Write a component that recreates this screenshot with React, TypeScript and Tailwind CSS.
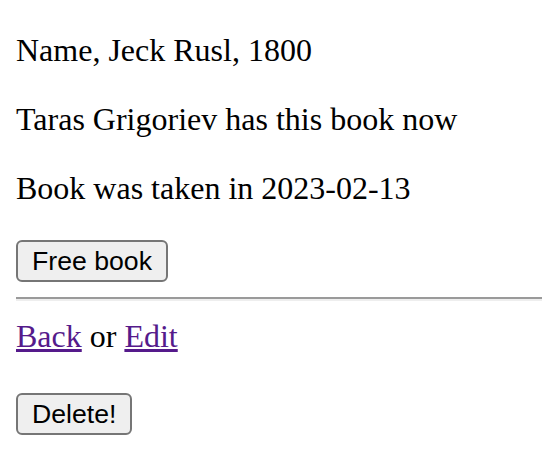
export default function App() {
  const btn =
    "inline-block bg-[#efefef] border-2 border-[#767676] rounded-[6px] px-[14px] h-[42px] font-['Liberation_Sans',Arial,sans-serif] text-[26.67px] leading-[normal] text-black";
  return (
    <div className="bg-white min-h-[468px] pl-[16px] pt-[32px] font-['Liberation_Serif','Times_New_Roman',serif] text-[32px] leading-[normal] text-black">
      <p className="mb-[32px]">Name, Jeck Rusl, 1800</p>
      <p className="mb-[32px]">Taras Grigoriev has this book now</p>
      <p className="mb-[32px]">Book was taken in 2023-02-13</p>
      <div className="pt-[1px]">
        <button className={btn}>Free book</button>
      </div>
      <hr className="mt-[15px] mb-[16px] border-0 border-t-[2px] border-b-[2px] border-t-[#9a9a9a] border-b-[#eeeeee]" />
      <div className="pt-[1px]">
        <a href="#" className="text-[#551a8b] underline">Back</a> or{" "}
        <a href="#" className="text-[#551a8b] underline">Edit</a>
      </div>
      <div className="mt-[38px]">
        <button className={btn}>Delete!</button>
      </div>
    </div>
  );
}
